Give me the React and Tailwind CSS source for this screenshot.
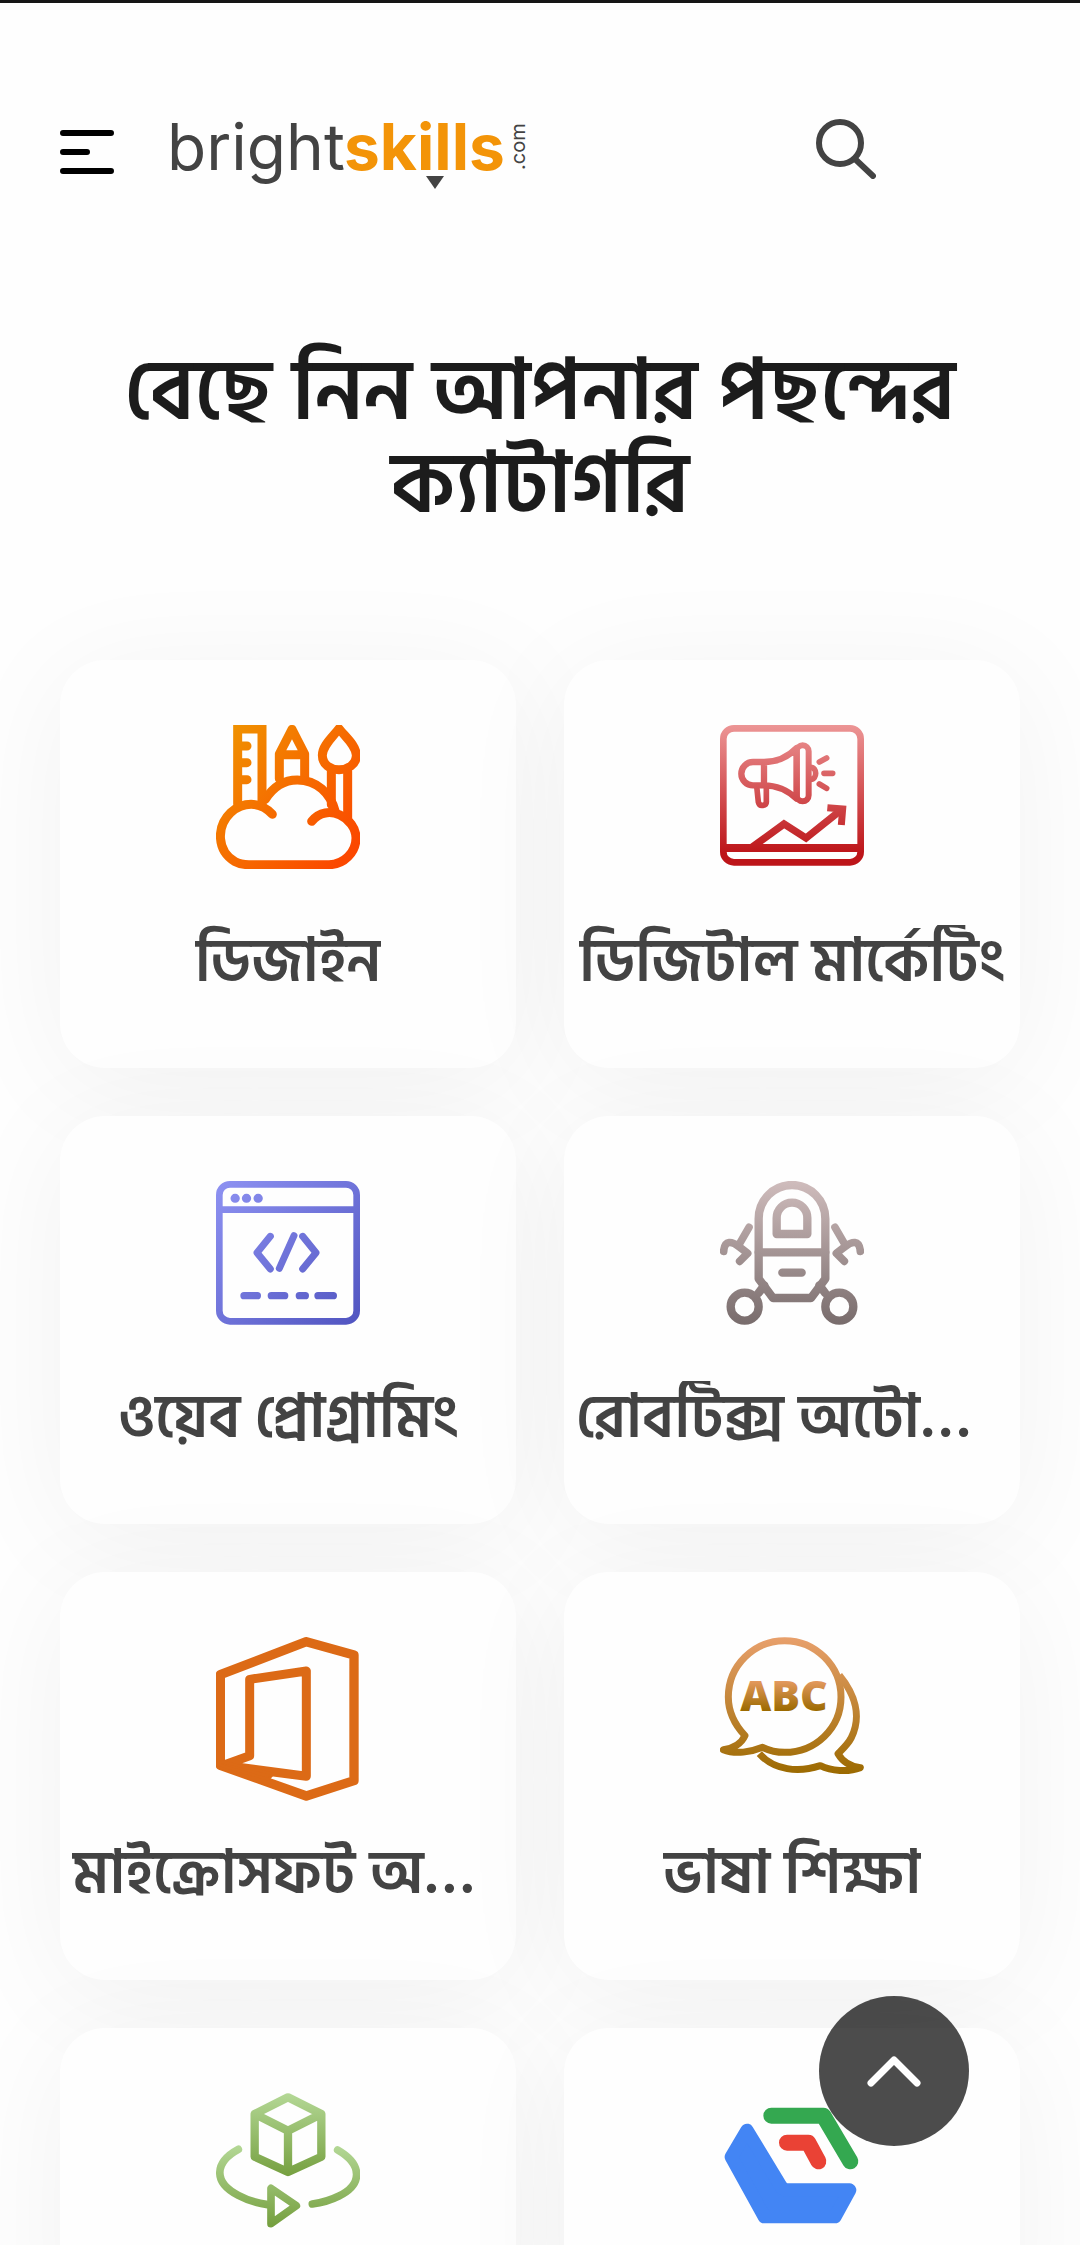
function Gradient({ id, from, to, diagonal, box }) {
  const [x, y, w, h] = box;
  return (
    <linearGradient id={id} gradientUnits="userSpaceOnUse" x1={x} y1={y} x2={diagonal ? x + w : x} y2={y + h}>
      <stop offset="0" stopColor={from} />
      <stop offset="1" stopColor={to} />
    </linearGradient>
  );
}

function DesignIcon() {
  return (
    <svg viewBox="78 75 432 432" className="w-36" fill="none" stroke="url(#g-design)" strokeWidth="27" strokeLinecap="round" aria-hidden="true">
      <defs>
        <linearGradient id="g-design" gradientUnits="userSpaceOnUse" x1="110" y1="110" x2="490" y2="440">
          <stop offset="0" stopColor="#f09000" />
          <stop offset="1" stopColor="#fb4800" />
        </linearGradient>
      </defs>
      <path d="M143 312V87h73v225M155 138h16M155 188h16M155 239h16" />
      <path d="M268 236v-74l38-74 38 74v74M268 164h76" strokeLinejoin="round" />
      <path d="M447 86c-18 24-50 50-50 80 0 28 24 43 50 43s52-15 52-43c0-30-34-56-52-80z" strokeLinejoin="round" />
      <path d="M424 214v100M473 214v140" />
      <path d="M247 343c-38-42-90-36-124-6-46 44-42 116 12 148 14 8 28 9 42 9h240c44 0 81-36 81-80 0-60-86-108-133-50" />
      <path d="M226 298c24-38 58-58 96-58 58 0 100 40 114 95" />
    </svg>
  );
}

function MarketingIcon() {
  return (
    <svg viewBox="90 75 432 432" className="w-36" fill="none" stroke="url(#g-marketing)" strokeWidth="20" strokeLinejoin="round" aria-hidden="true">
      <defs>
        <Gradient id="g-marketing" from="#ee9a9a" to="#bd1519" box={[90, 60, 432, 400]} />
      </defs>
      <rect x="100" y="85" width="412" height="402" rx="32" />
      <path d="M99 444h413" strokeWidth="24" />
      <path d="M222 186h-33a35 35 0 0 0 0 70h33zM222 186c38 0 74-17 98-42v152c-28-26-60-40-98-40" strokeWidth="19" />
      <rect x="320" y="136" width="36" height="168" rx="18" strokeWidth="18" />
      <path d="M362 202c20 0 20 36 0 36M200 258l5 48q3 12 14 10 11-1 10-13v-45" strokeWidth="17" />
      <path d="M388 186l22-12M402 220h26M388 252l22 13" strokeWidth="17" strokeLinecap="round" />
      <path d="M186 442l96-70 66 42 100-80" strokeWidth="22" strokeLinejoin="miter" />
      <path d="M412 323l46 4-4 48" strokeWidth="21" strokeLinejoin="miter" />
    </svg>
  );
}

function WebIcon() {
  return (
    <svg viewBox="78 63 432 432" className="w-36" fill="none" stroke="url(#g-web)" strokeWidth="20" strokeLinecap="round" strokeLinejoin="round" aria-hidden="true">
      <defs>
        <Gradient id="g-web" from="#8e92f2" to="#5054c0" diagonal box={[78, 63, 432, 432]} />
      </defs>
      <rect x="88" y="73" width="412" height="411" rx="32" />
      <path d="M90 149h410" />
      <path d="M135 115h1M169 115h1M204 115h1" strokeWidth="27" />
      <path d="M241 229l-40 49 40 49M312 227l-44 98M338 229l40 49-40 49" strokeWidth="21" />
      <path d="M162 407h40M244 407h40M328 407h18M384 407h46" strokeWidth="22" />
    </svg>
  );
}

function RobotIcon() {
  return (
    <svg viewBox="90 63 432 432" className="w-36" fill="none" stroke="url(#g-robot)" strokeWidth="25" strokeLinecap="round" strokeLinejoin="round" aria-hidden="true">
      <defs>
        <Gradient id="g-robot" from="#cfbcbc" to="#786c6c" box={[90, 63, 432, 432]} />
      </defs>
      <path d="M206 356V176a100 101 0 0 1 200 0v180l-43 58H249z" />
      <path d="M206 277h200M277 338h58M223 376l-18 24M388 376l18 24" />
      <path d="M260 222v-48a46 46 0 0 1 92 0v48z" />
      <circle cx="164" cy="440" r="42" />
      <circle cx="448" cy="440" r="42" />
      <path d="M177 202l-30 52M101 274c3-36 25-30 46-14l26 20-24 24" strokeWidth="23" />
      <path d="M435 202l30 52M511 274c-3-36-25-30-46-14l-26 20 24 24" strokeWidth="23" />
    </svg>
  );
}

function OfficeIcon() {
  return (
    <svg viewBox="78 51 432 492" className="w-36" fill="none" stroke="#dc6a16" strokeWidth="27" strokeLinejoin="round" aria-hidden="true">
      <path d="M91 164L349 65l143 40v377l-143 46L91 436z" strokeWidth="28" />
      <path d="M100 436l79-29V178l170-25v316z" />
      <path d="M91 424l158 38-14 16-144-42z" fill="#dc6a16" strokeWidth="8" />
    </svg>
  );
}

function LanguageIcon() {
  return (
    <svg viewBox="90 51 432 432" className="w-36" fill="none" stroke="url(#g-lang)" strokeWidth="21" strokeLinejoin="round" aria-hidden="true">
      <defs>
        <Gradient id="g-lang" from="#e8a06c" to="#9c6a00" box={[90, 51, 432, 410]} />
        <linearGradient id="g-abc" gradientUnits="userSpaceOnUse" x1="0" y1="180" x2="0" y2="272">
          <stop offset="0" stopColor="#e69b62" />
          <stop offset="1" stopColor="#9c6a00" />
        </linearGradient>
      </defs>
      <path d="M100 389c30-4 54-18 65-42-32-34-50-74-50-116C115 136 192 62 284 62s169 75 169 169-77 166-169 166c-24 0-46-5-66-15-34 14-82 22-118 7z" />
      <path d="M448 166c46 56 68 122 36 187-10 20-28 36-40 48 14 24 36 38 67 42-36 14-88 10-120-6-66 22-138 14-183-36" />
      <text x="282" y="272" textAnchor="middle" fill="url(#g-abc)" stroke="none" className="font-['Open_Sans','Noto_Sans',sans-serif] text-[128px] font-extrabold">ABC</text>
    </svg>
  );
}

function CubeIcon() {
  return (
    <svg viewBox="78 69 432 432" className="w-36" fill="none" stroke="url(#g-cube-top)" strokeWidth="25" strokeLinecap="round" strokeLinejoin="round" aria-hidden="true">
      <defs>
        <Gradient id="g-cube-top" from="#b4d896" to="#76a040" box={[78, 69, 432, 250]} />
        <Gradient id="g-cube-ring" from="#b4d896" to="#76a040" box={[78, 225, 432, 240]} />
      </defs>
      <path d="M294 82l100 50v128l-100 46-100-46V132zM194 132l100 50 100-50M294 182v122" />
      <g stroke="url(#g-cube-ring)" strokeWidth="23">
        <path d="M145 238c-70 38-78 98 0 138 26 14 54 23 88 28M443 240c76 44 74 104 4 138-24 12-50 20-80 24" />
        <path d="M243 355v106l76-54z" />
      </g>
    </svg>
  );
}

function CloudIcon() {
  return (
    <svg viewBox="62 337 432 432" className="w-36" fill="none" strokeLinecap="round" strokeLinejoin="round" aria-hidden="true">
      <path d="M143 449L96 529l99 179h212l44-80H262q-12-2-18-12z" fill="#4385f4" stroke="#4385f4" strokeWidth="40" />
      <path d="M216 405h156l81 137" stroke="#34a850" strokeWidth="48" />
      <path d="M263 486h64l30 56" stroke="#ea4235" strokeWidth="48" />
    </svg>
  );
}

const categories = [
  { label: "ডিজাইন", Icon: DesignIcon },
  { label: "ডিজিটাল মার্কেটিং", Icon: MarketingIcon },
  { label: "ওয়েব প্রোগ্রামিং", Icon: WebIcon },
  { label: "রোবটিক্স অটোমেশন", Icon: RobotIcon },
  { label: "মাইক্রোসফট অফিস", Icon: OfficeIcon },
  { label: "ভাষা শিক্ষা", Icon: LanguageIcon },
  { label: "", Icon: CubeIcon },
  { label: "", Icon: CloudIcon },
];

function Logo() {
  return (
    <svg viewBox="0 0 360 72" className="w-[360px] overflow-visible" role="img" aria-label="brightskills.com">
      <g className="font-['Inter',sans-serif]">
        <text x="-3" y="53" fill="#434343" className="text-[64px]">bright</text>
        <text x="174" y="53" fill="#f39408" className="text-[64px] font-bold">skills</text>
        <text transform="translate(355 53) rotate(-90)" fill="#434343" className="text-[20px]">.com</text>
      </g>
      <path d="M256 59h18l-9 13z" fill="#434343" />
    </svg>
  );
}

export default function App() {
  return (
    <div className="h-screen overflow-hidden border-t-3 border-[#151515] bg-[#fefefe] font-['Hind_Siliguri','Noto_Sans_Bengali','Noto_Sans',sans-serif]">
      <header className="flex items-start px-15 pt-[114px]">
        <button type="button" aria-label="Menu" className="mt-3">
          <svg viewBox="0 0 54 46" className="w-[54px]" fill="none" stroke="#000" strokeWidth="6" strokeLinecap="round">
            <path d="M3 4h48M3 23h24M3 42h48" />
          </svg>
        </button>
        <a href="#" className="ml-14">
          <Logo />
        </a>
        <button type="button" aria-label="Search" className="mt-0.5 mr-36 ml-auto">
          <svg viewBox="0 0 60 60" className="w-[60px]" fill="none" stroke="#434343" strokeWidth="6" strokeLinecap="round">
            <circle cx="24" cy="24" r="21" />
            <path d="M39 40l18 17" />
          </svg>
        </button>
      </header>

      <main className="px-15 pt-[158px]">
        <h1 className="text-center text-[84px] leading-[93px] font-semibold text-[#1c1c1c]">বেছে নিন আপনার পছন্দের ক্যাটাগরি</h1>
        <div className="mt-[127px] grid grid-cols-2 gap-12">
          {categories.map(({ label, Icon }, i) => (
            <a key={i} href="#" className="flex h-[408px] flex-col items-center rounded-[45px] bg-[#fefefe] px-3 pt-[65px] shadow-[0_15px_120px_rgba(0,0,0,0.05)]">
              <span className="flex h-50 items-start">
                <Icon />
              </span>
              <span className="block max-w-full truncate text-[60px] leading-[76px] font-semibold text-[#434343]">{label}</span>
            </a>
          ))}
        </div>
      </main>

      <button type="button" aria-label="Back to top" className="fixed right-[111px] bottom-[99px] flex size-[150px] items-center justify-center rounded-full bg-black/70">
        <svg viewBox="0 0 54 32" className="w-[54px]" fill="none" stroke="#fff" strokeWidth="7" strokeLinecap="round" strokeLinejoin="round">
          <path d="M4 28L27 5l23 23" />
        </svg>
      </button>
    </div>
  );
}
